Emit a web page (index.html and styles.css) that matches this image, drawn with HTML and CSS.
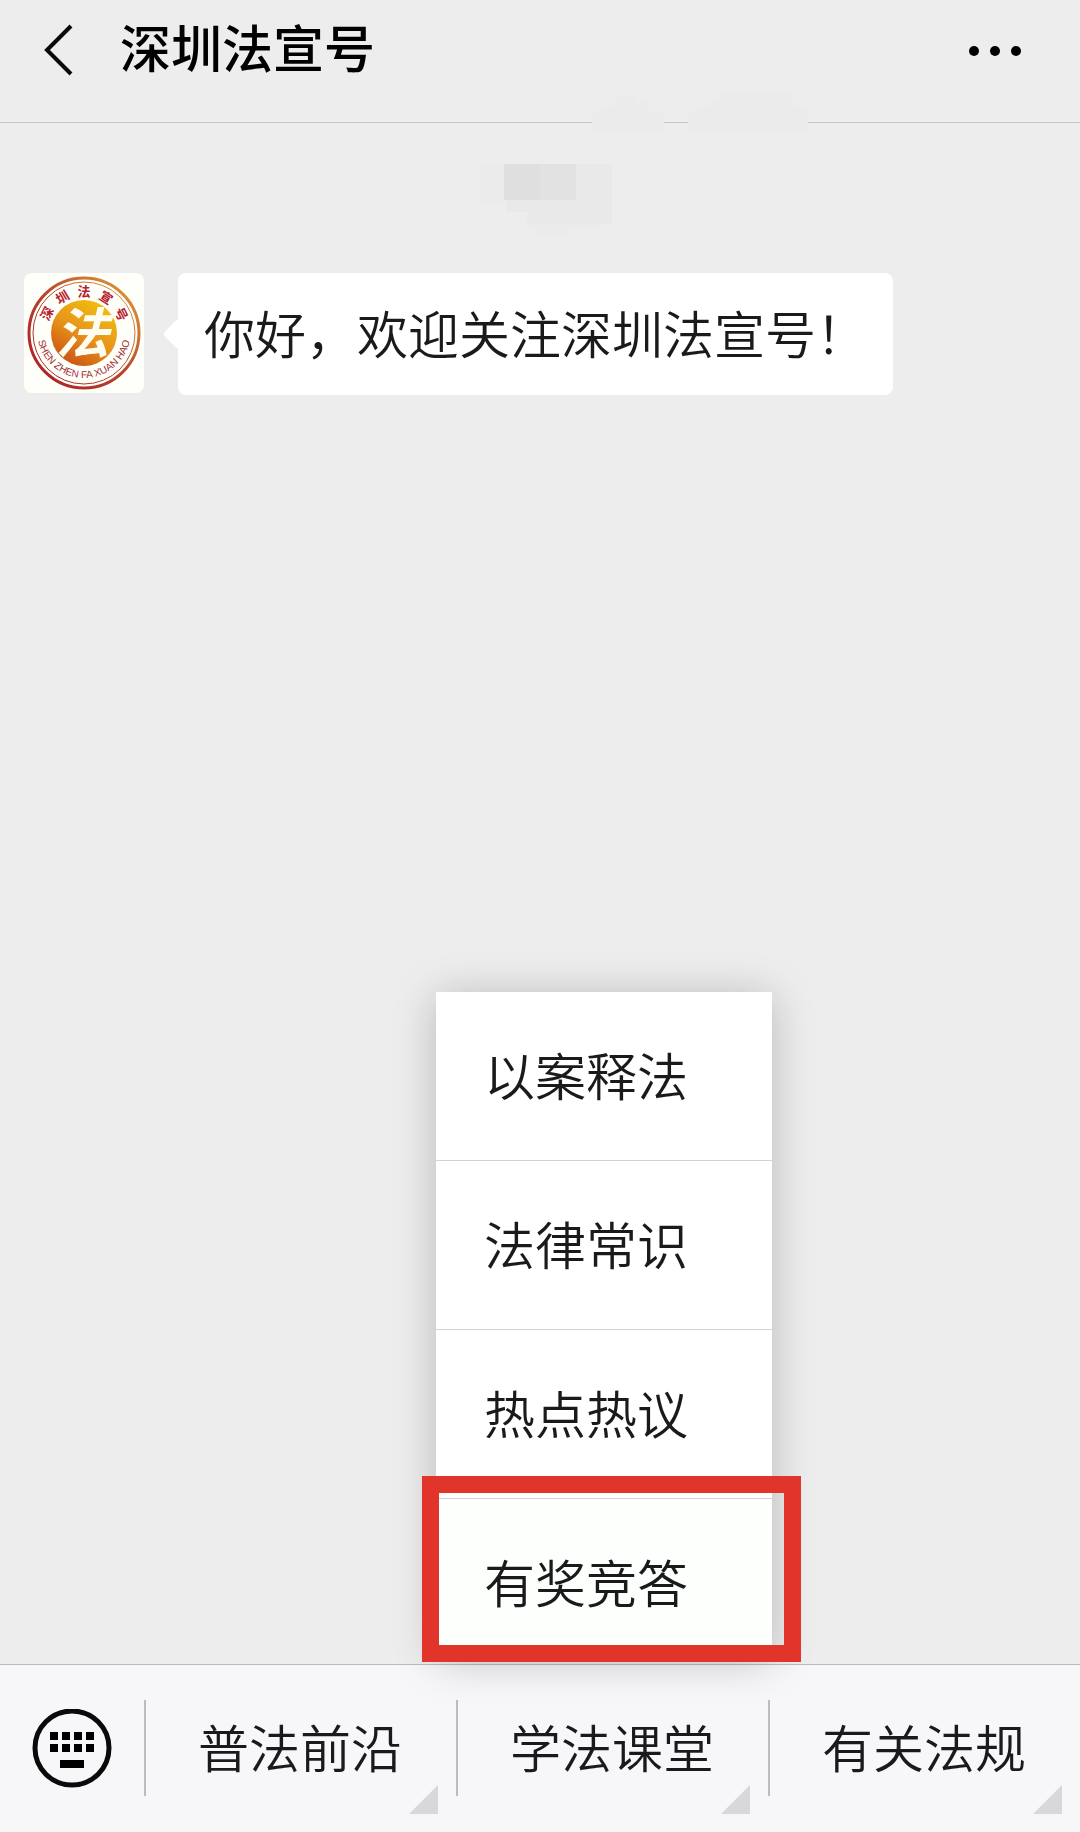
FILE: index.html
```html
<!DOCTYPE html>
<html lang="zh-CN">
<head>
    <meta charset="UTF-8">
    <meta name="viewport" content="width=device-width, initial-scale=1.0">
    <title>深圳法宣号</title>
    <link rel="stylesheet" href="styles.css">
</head>
<body>

    <header class="top-bar">
        <button type="button" class="icon-button" aria-label="返回">
            <svg width="32" height="56" viewBox="0 0 32 56" fill="none" stroke="#0a0a0a" stroke-width="4">
                <path d="M29 4L5 28L29 52"/>
            </svg>
        </button>
        <h1>深圳法宣号</h1>
        <button type="button" class="icon-button" aria-label="更多">
            <svg width="54" height="16" viewBox="0 0 54 16" fill="#000">
                <circle cx="5" cy="9" r="5"/>
                <circle cx="26" cy="9" r="5"/>
                <circle cx="47" cy="9" r="5"/>
            </svg>
        </button>
        <!-- blurred patches over the divider -->
        <svg class="smudge" width="230" height="40" viewBox="0 0 230 40" aria-hidden="true">
            <path fill="#ebebeb" d="M9 40V20H16V14H32V4H52V10H64V20H81V40ZM105 40V20H112V14H128V8H136V2H210V14H225V40Z"/>
        </svg>
    </header>

    <main class="chat">
        <!-- hidden time stamp -->
        <svg class="stamp" width="148" height="74" viewBox="-14 0 148 74" aria-hidden="true">
            <path fill="#e9e9e9" d="M0 4H132V64H120V70H88V74H56V66H46V52H26V42H0Z" opacity=".35"/>
            <path fill="#e9e9e9" d="M26 4H132V64H48V52H26Z"/>
            <path fill="#dfdfdf" d="M24 4H60V40H24Z"/>
            <path fill="#e2e2e2" d="M60 4H96V40H60Z"/>
        </svg>

        <div class="message">
            <svg class="avatar" width="120" height="120" viewBox="0 0 120 120" role="img" aria-label="深圳法宣号">
                <defs>
                    <linearGradient id="ring" x1="1" y1="0" x2="0" y2="1">
                        <stop offset="0" stop-color="#e0a83c"/>
                        <stop offset=".5" stop-color="#b8442c"/>
                        <stop offset="1" stop-color="#a81c28"/>
                    </linearGradient>
                    <linearGradient id="gold" x1=".8" y1="0" x2=".2" y2="1">
                        <stop offset="0" stop-color="#f2c20c"/>
                        <stop offset=".5" stop-color="#e8951a"/>
                        <stop offset="1" stop-color="#c94c14"/>
                    </linearGradient>
                    <path id="arc" d="M13 58A47 47 0 0 0 107 58"/>
                </defs>
                <rect width="120" height="120" rx="8" fill="#fffffa"/>
                <circle cx="60" cy="60" r="55" fill="none" stroke="url(#ring)" stroke-width="3"/>
                <circle cx="60" cy="60" r="51" fill="none" stroke="url(#ring)" stroke-width="1"/>
                <circle cx="60" cy="60" r="33" fill="url(#gold)"/>
                <text class="seal-main" x="58" y="80">法</text>
                <g class="seal-name">
                    <text x="60" y="23" transform="rotate(-62 60 60)">深</text>
                    <text x="60" y="23" transform="rotate(-31 60 60)">圳</text>
                    <text x="60" y="23">法</text>
                    <text x="60" y="23" transform="rotate(32 60 60)">宣</text>
                    <text x="60" y="23" transform="rotate(63 60 60)">号</text>
                </g>
                <text class="seal-latin"><textPath href="#arc" startOffset="50%">SHEN ZHEN FA XUAN HAO</textPath></text>
            </svg>
            <p class="bubble">你好，欢迎关注深圳法宣号！</p>
        </div>
    </main>

    <footer class="bottom-bar">
        <button type="button" class="keyboard" aria-label="键盘">
            <svg width="80" height="80" viewBox="0 0 80 80">
                <circle cx="40" cy="39" r="37" fill="none" stroke="#0a0a0a" stroke-width="5"/>
                <path d="M18 23h8v8h-8zM30 23h8v8h-8zM42 23h8v8h-8zM54 23h8v8h-8zM18 35h8v8h-8zM30 35h8v8h-8zM42 35h8v8h-8zM54 35h8v8h-8zM28 51h24v8H28z"/>
            </svg>
        </button>
        <nav class="tabs">
            <div class="tab">
                <button type="button">普法前沿</button>
            </div>
            <div class="tab">
                <button type="button" aria-expanded="true">学法课堂</button>
                <ul class="menu">
                    <li><a href="#case">以案释法</a></li>
                    <li><a href="#law">法律常识</a></li>
                    <li><a href="#topics">热点热议</a></li>
                    <li class="marked"><a href="#quiz">有奖竞答</a></li>
                </ul>
            </div>
            <div class="tab">
                <button type="button">有关法规</button>
            </div>
        </nav>
    </footer>

</body>
</html>
```

FILE: styles.css
```css
* {
    box-sizing: border-box;
}

body {
    display: flex;
    flex-direction: column;
    min-height: 100vh;
    margin: 0;
    background-color: #ededee;
    color: #1a1a1c;
    font-family: "Noto Sans CJK SC", sans-serif;
    font-size: 51px;
    font-weight: 350;
    line-height: 52px;
}

button {
    padding: 0;
    border: none;
    background: none;
    color: inherit;
    font: inherit;
    cursor: pointer;
}

svg {
    display: block;
}

.top-bar {
    position: relative;
    display: flex;
    align-items: center;
    padding: 20px 57px 42px 42px;
    border-bottom: 1px solid #c6c6c6;
    background-color: #ededed;
}

h1 {
    flex: 1;
    margin: 0 0 0 46px;
    padding-bottom: 8px;
    color: #000;
    font-size: 51px;
    font-weight: 500;
}

/* lies over the divider */
.smudge {
    position: absolute;
    left: 54%;
    bottom: -10px;
}

.chat {
    flex: 1;
    padding: 37px 24px;
}

.stamp {
    margin: 0 auto 39px;
}

.message {
    display: flex;
    align-items: flex-start;
    gap: 34px;
}

.avatar {
    flex: none;
}

.seal-main,
.seal-name {
    font-weight: 700;
    text-anchor: middle;
}

.seal-main {
    fill: #fffdf2;
    font-size: 54px;
    font-style: italic;
}

.seal-name {
    fill: #b5202c;
    font-size: 13px;
}

.seal-latin {
    fill: #a02c36;
    font-family: "Liberation Sans", sans-serif;
    font-size: 10px;
    font-weight: 400;
    text-anchor: middle;
}

.bubble {
    position: relative;
    margin: 0;
    padding: 33px 26px 37px;
    border-radius: 8px;
    background-color: #fff;
}

.bubble::before {
    content: "";
    position: absolute;
    top: 50px;
    left: -11px;
    width: 22px;
    height: 22px;
    border-radius: 4px;
    background-color: #fff;
    transform: rotate(45deg);
}

.bottom-bar {
    display: flex;
    border-top: 1px solid #bcbcbe;
    background-color: #f7f7f9;
}

.keyboard {
    padding: 0 32px;
}

.tabs {
    flex: 1;
    display: flex;
    align-items: center;
}

.tab {
    position: relative;
    flex: 1;
    padding: 35px 0 36px;
}

.tab button {
    width: 100%;
    padding: 20px 2px 24px 0;
    border-left: 2px solid #bcbcbe;
}

/* corner mark */
.tab::after {
    content: "";
    position: absolute;
    right: 18px;
    bottom: 18px;
    width: 29px;
    height: 29px;
    background-color: #d8d8da;
    clip-path: polygon(100% 0, 100% 100%, 0 100%);
}

.menu {
    position: absolute;
    left: -20px;
    bottom: calc(100% + 8px);
    width: 336px;
    margin: 0;
    padding: 0;
    background-color: #fff;
    box-shadow: 0 4px 40px rgba(0, 0, 0, 0.22);
    list-style: none;
}

.menu li + li {
    border-top: 1px solid #d2d2d4;
}

.menu a {
    display: block;
    padding: 56px 48px 60px;
    color: inherit;
    text-decoration: none;
}

.menu .marked {
    position: relative;
}

.menu .marked a {
    padding-bottom: 50px;
    background-color: #fdfffd;
}

.marked::after {
    content: "";
    position: absolute;
    top: -23px;
    right: -29px;
    bottom: -5px;
    left: -14px;
    border: 17px solid #e1352c;
    pointer-events: none;
}
```
